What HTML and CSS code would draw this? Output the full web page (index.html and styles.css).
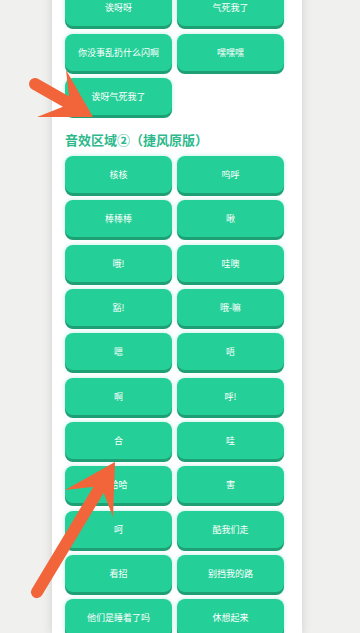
FILE: index.html
```html
<!DOCTYPE html>
<html lang="zh">
<head>
<meta charset="utf-8">
<meta name="viewport" content="width=360">
<link rel="stylesheet" href="styles.css">
</head>
<body>
<main class="panel">
  <div class="grid grid-first">
    <button class="btn">诶呀呀</button>
    <button class="btn">气死我了</button>
    <button class="btn">你没事乱扔什么闪啊</button>
    <button class="btn">嘿嘿嘿</button>
    <button class="btn">诶呀气死我了</button>
  </div>
  <h2 class="section-title">音效区域②（捷风原版）</h2>
  <div class="grid">
    <button class="btn">核核</button>
    <button class="btn">呜呼</button>
    <button class="btn">棒棒棒</button>
    <button class="btn">啾</button>
    <button class="btn">哦!</button>
    <button class="btn">哇噢</button>
    <button class="btn">豁!</button>
    <button class="btn">哦-嘛</button>
    <button class="btn">嗯</button>
    <button class="btn">唔</button>
    <button class="btn">啊</button>
    <button class="btn">呼!</button>
    <button class="btn">合</button>
    <button class="btn">哇</button>
    <button class="btn">哈哈</button>
    <button class="btn">害</button>
    <button class="btn">呵</button>
    <button class="btn">酷我们走</button>
    <button class="btn">看招</button>
    <button class="btn">别挡我的路</button>
    <button class="btn">他们是睡着了吗</button>
    <button class="btn">休想起来</button>
  </div>
</main>
<svg class="arrows" width="360" height="633" viewBox="0 0 360 633" aria-hidden="true">
  <line x1="35" y1="84" x2="72" y2="105" class="shaft"/>
  <polygon points="93,117 66,70 70,104 37,117" class="head"/>
  <line x1="37" y1="592" x2="102" y2="484" class="shaft"/>
  <polygon points="115,462 65,490 101,486 113,517" class="head"/>
</svg>
</body>
</html>
```
FILE: styles.css
```css
html, body {
  margin: 0;
  padding: 0;
}
body {
  width: 360px;
  height: 633px;
  overflow: hidden;
  background: #f0f0ee;
  font-family: "Noto Sans CJK SC", "Noto Sans", sans-serif;
  position: relative;
}
.panel {
  margin-left: 52px;
  width: 250px;
  min-height: 633px;
  box-sizing: border-box;
  padding: 0 18px 0 13px;
  background: #ffffff;
  box-shadow: 0 0 10px rgba(0, 0, 0, 0.13);
}
.grid {
  display: grid;
  grid-template-columns: 107px 107px;
  column-gap: 5px;
  row-gap: 7.33px;
}
.grid-first {
  margin-top: -10.7px;
}
.btn {
  height: 37px;
  border: none;
  border-radius: 8px;
  background: #25d098;
  color: #ffffff;
  font-family: "Noto Sans CJK SC", "Noto Sans", sans-serif;
  font-size: 9px;
  font-weight: 400;
  padding: 0;
  box-shadow: 0 3px 0 #1f9f74, 0 0 4px rgba(40, 210, 160, 0.35);
}
.section-title {
  margin: 15px 0 6px 0;
  line-height: 20px;
  font-size: 13px;
  font-weight: 700;
  color: #2db98c;
}
.arrows {
  position: absolute;
  left: 0;
  top: 0;
  pointer-events: none;
}
.shaft {
  stroke: #f2643a;
  stroke-width: 12;
  stroke-linecap: round;
}
.head {
  fill: #f2643a;
}
```
